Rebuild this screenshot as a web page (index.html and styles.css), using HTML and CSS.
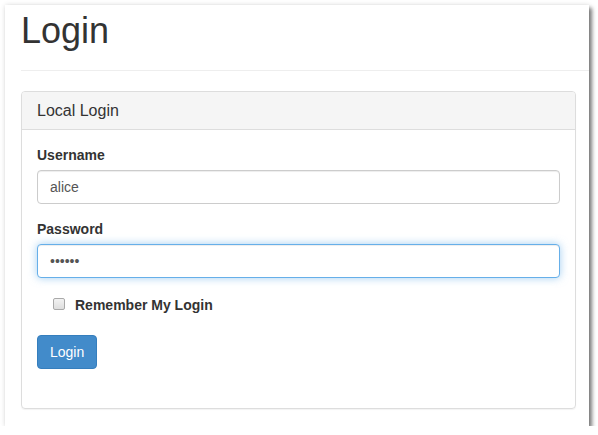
FILE: index.html
```html
<!DOCTYPE html>
<html>
<head>
<meta charset="utf-8">
<link rel="stylesheet" href="styles.css">
</head>
<body>
<div class="window">
  <div class="page-header">
    <h1>Login</h1>
  </div>
  <div class="panel">
    <div class="panel-heading">Local Login</div>
    <div class="panel-body">
      <form>
        <div class="form-group">
          <label class="control-label">Username</label>
          <input class="form-control" type="text" value="alice">
        </div>
        <div class="form-group">
          <label class="control-label">Password</label>
          <input class="form-control focused" type="password" value="secret">
        </div>
        <div class="checkbox">
          <label><input type="checkbox" class="check"><span>Remember My Login</span></label>
        </div>
        <button type="button" class="btn">Login</button>
      </form>
    </div>
  </div>
</div>
</body>
</html>
```
FILE: styles.css
```css
html, body {
  margin: 0;
  padding: 0;
  background: #fff;
}
body {
  padding: 5px 0 0 5px;
  font-family: "Liberation Sans", Arial, sans-serif;
  font-size: 14px;
  line-height: 20px;
  color: #333;
}
.window {
  width: 584px;
  height: 421px;
  box-sizing: border-box;
  background: #fff;
  box-shadow: 3px 3px 4px rgba(0,0,0,0.5), 0 0 5px rgba(0,0,0,0.12);
  padding-left: 16px;
  overflow: hidden;
}
.page-header {
  padding-bottom: 9px;
  border-bottom: 1px solid #eee;
  margin: 0 0 20px 0;
  padding-top: 6px;
}
.page-header h1 {
  margin: 0 0 10px 0;
  font-size: 36px;
  font-weight: 400;
  line-height: 39.6px;
  color: #333;
}
.panel {
  width: 555px;
  height: 318px;
  box-sizing: border-box;
  border: 1px solid #ddd;
  border-radius: 4px;
  box-shadow: 0 1px 1px rgba(0,0,0,0.05);
}
.panel-heading {
  background: #f5f5f5;
  border-bottom: 1px solid #ddd;
  border-radius: 3px 3px 0 0;
  padding: 10px 15px;
  font-size: 16px;
  line-height: 17px;
  color: #333;
}
.panel-body {
  padding: 15px 15px 15px 15px;
}
.form-group {
  margin-bottom: 15px;
}
.control-label {
  display: block;
  font-weight: 700;
  margin-bottom: 5px;
}
.form-control {
  display: block;
  width: 523px;
  height: 34px;
  box-sizing: border-box;
  padding: 6px 12px;
  font-family: "Liberation Sans", Arial, sans-serif;
  font-size: 14px;
  color: #555;
  background: #fff;
  border: 1px solid #ccc;
  border-radius: 4px;
  box-shadow: inset 0 1px 1px rgba(0,0,0,0.075);
  outline: none;
  margin: 0;
}
.form-control.focused {
  border-color: #66afe9;
  box-shadow: inset 0 1px 1px rgba(0,0,0,0.075), 0 0 8px rgba(102,175,233,0.6);
}
.checkbox {
  margin: 16px 0 20px 16px;
}
.checkbox label {
  display: flex;
  align-items: center;
  font-weight: 700;
  line-height: 20px;
}
.check {
  appearance: none;
  -webkit-appearance: none;
  width: 12px;
  height: 12px;
  margin: 0 10px 0 0;
  border: 1px solid #a9a9a9;
  border-radius: 2px;
  background: linear-gradient(#f2f2f2, #dedede);
}
.checkbox span {
  padding-top: 1px;
}
.btn {
  display: block;
  height: 34px;
  padding: 6px 12px;
  font-family: "Liberation Sans", Arial, sans-serif;
  font-size: 14px;
  line-height: 20px;
  color: #fff;
  background: #428bca;
  border: 1px solid #357ebd;
  border-radius: 4px;
  cursor: pointer;
}
```
